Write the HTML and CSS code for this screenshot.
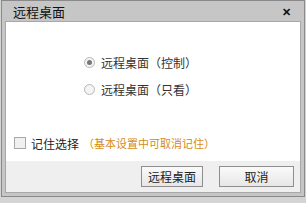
FILE: index.html
```html
<!DOCTYPE html>
<html lang="zh-CN">
<head>
    <meta charset="UTF-8">
    <title>远程桌面</title>
    <link rel="stylesheet" href="styles.css">
</head>
<body>
    <div class="janela">
        <div class="titulo">
            <span>远程桌面</span>
            <span class="fechar">✕</span>
        </div>
        <div class="conteudo">
            <div class="opcoes">
                <label class="opcao"><span class="radio marcado"></span>远程桌面（控制）</label>
                <label class="opcao"><span class="radio"></span>远程桌面（只看）</label>
            </div>
            <label class="lembrar"><span class="caixa"></span>记住选择<span class="dica">（基本设置中可取消记住）</span></label>
            <div class="rodape">
                <button class="botao">远程桌面</button>
                <button class="botao">取消</button>
            </div>
        </div>
    </div>
</body>
</html>
```

FILE: styles.css
```css
body {
    margin: 0;
    background: #d4d4d4;
    font-family: "Noto Sans CJK SC", "Liberation Sans", sans-serif;
    font-size: 12px;
    color: #222;
}

.janela {
    margin-left: 1px;
    width: 296px;
    height: 192px;
    border: 1px solid #8a8a8a;
    background: #c6c6c6;
    padding: 0 3px 3px 3px;
    display: flex;
    flex-direction: column;
}

.titulo {
    height: 20px;
    display: flex;
    align-items: center;
    justify-content: space-between;
    padding: 0 10px 0 8px;
    font-size: 13px;
    color: #111;
}

.fechar {
    font-size: 11px;
    font-weight: bold;
}

.conteudo {
    flex: 1;
    background: #fff;
    border: 1px solid #a8a8a8;
    display: flex;
    flex-direction: column;
}

.opcoes {
    margin: 31px 0 0 78px;
    display: flex;
    flex-direction: column;
    gap: 9px;
}

.opcao {
    display: flex;
    align-items: center;
    gap: 6px;
    height: 18px;
    color: #333;
}

.radio {
    width: 9px;
    height: 9px;
    border: 1px solid #b8b8b8;
    border-radius: 50%;
    background: #f4f4f4;
    position: relative;
}

.radio.marcado::after {
    content: "";
    position: absolute;
    left: 2px;
    top: 2px;
    width: 5px;
    height: 5px;
    border-radius: 50%;
    background: #777;
}

.lembrar {
    margin: 36px 0 0 8px;
    display: flex;
    align-items: center;
    gap: 5px;
    height: 18px;
}

.caixa {
    width: 10px;
    height: 10px;
    border: 1px solid #a8a8a8;
    background: #f0f0f0;
}

.dica {
    color: #d88a12;
    font-size: 11px;
    margin-left: -1px;
}

.rodape {
    margin-top: auto;
    height: 31px;
    background: #efefef;
    display: flex;
    justify-content: flex-end;
    align-items: center;
    gap: 16px;
    padding-right: 6px;
}

.botao {
    width: 62px;
    height: 21px;
    padding: 0;
    border: 1px solid #8e8e8e;
    background: linear-gradient(#fafafa, #e6e6e6);
    font-family: inherit;
    font-size: 12px;
    color: #222;
}

.botao + .botao {
    width: 75px;
}
```
